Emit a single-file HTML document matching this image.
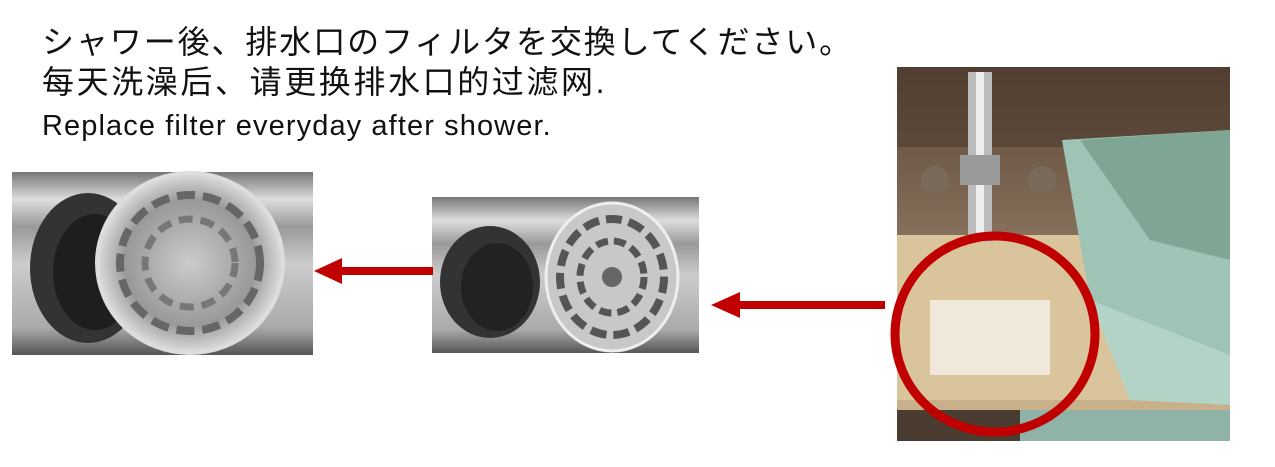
<!DOCTYPE html>
<html><head><meta charset="utf-8"><style>
html,body{margin:0;padding:0;background:#fff;width:1275px;height:467px;overflow:hidden}
.t{position:absolute;left:42px;color:#111;font-family:"Liberation Sans","Noto Sans CJK JP",sans-serif;white-space:nowrap}
</style></head><body>
<div class="t" style="top:20px;font-size:32px;letter-spacing:1.9px;font-family:'Noto Sans CJK JP',sans-serif;line-height:40px">シャワー後、排水口のフィルタを交換してください。</div>
<div class="t" style="top:62px;font-size:32px;letter-spacing:2.6px;font-family:'Liberation Sans','Noto Sans CJK SC',sans-serif;line-height:40px">每天洗澡后、请更换排水口的过滤网.</div>
<div class="t" style="top:108px;font-size:29px;letter-spacing:1.1px;line-height:36px">Replace filter everyday after shower.</div>
<svg width="1275" height="467" style="position:absolute;left:0;top:0">
<defs>
<linearGradient id="steel" x1="0" y1="0" x2="0" y2="1">
<stop offset="0" stop-color="#777"/><stop offset=".15" stop-color="#ddd"/><stop offset=".3" stop-color="#999"/><stop offset=".5" stop-color="#ccc"/><stop offset=".85" stop-color="#aaa"/><stop offset="1" stop-color="#555"/></linearGradient>
<radialGradient id="mesh"><stop offset="0" stop-color="#ccc"/><stop offset=".7" stop-color="#999"/><stop offset="1" stop-color="#ddd"/></radialGradient>
<linearGradient id="cab" x1="0" y1="0" x2="0" y2="1"><stop offset="0" stop-color="#5a4535"/><stop offset=".5" stop-color="#8b7560"/><stop offset="1" stop-color="#a08a70"/></linearGradient>
</defs>
<rect x="12" y="172" width="301" height="183" fill="url(#steel)"/>
<ellipse cx="88" cy="268" rx="58" ry="75" fill="#333"/>
<ellipse cx="95" cy="272" rx="42" ry="58" fill="#1e1e1e"/>
<ellipse cx="190" cy="263" rx="93" ry="90" fill="url(#mesh)" stroke="#ddd" stroke-width="4"/>
<ellipse cx="190" cy="263" rx="70" ry="68" fill="none" stroke="#666" stroke-width="8" stroke-dasharray="18 8"/>
<ellipse cx="190" cy="263" rx="45" ry="44" fill="none" stroke="#777" stroke-width="7" stroke-dasharray="14 8"/>
<rect x="432" y="197" width="267" height="156" fill="url(#steel)"/>
<ellipse cx="490" cy="282" rx="50" ry="56" fill="#333"/>
<ellipse cx="497" cy="287" rx="36" ry="44" fill="#222"/>
<ellipse cx="612" cy="277" rx="66" ry="74" fill="#c8c8c8" stroke="#eee" stroke-width="3"/>
<ellipse cx="612" cy="277" rx="52" ry="58" fill="none" stroke="#555" stroke-width="8" stroke-dasharray="16 7"/>
<ellipse cx="612" cy="277" rx="32" ry="36" fill="none" stroke="#555" stroke-width="7" stroke-dasharray="12 6"/>
<circle cx="612" cy="277" r="10" fill="#666"/>
<rect x="335" y="267" width="98" height="8" fill="#c00000"/>
<polygon points="314,271 342,258 342,284" fill="#c00000"/>
<rect x="732" y="301" width="153" height="8" fill="#c00000"/>
<polygon points="711,305 740,292 740,318" fill="#c00000"/>
<rect x="897" y="67" width="333" height="374" fill="url(#cab)"/>
<rect x="897" y="67" width="333" height="80" fill="#4a372b" opacity=".5"/>
<rect x="897" y="235" width="333" height="170" fill="#d9c49c"/>
<rect x="897" y="400" width="333" height="10" fill="#c8b08a"/>
<rect x="897" y="410" width="333" height="31" fill="#4a3c30"/>
<rect x="968" y="72" width="24" height="170" fill="#bbb"/>
<rect x="976" y="72" width="8" height="170" fill="#eee"/>
<rect x="960" y="155" width="40" height="30" fill="#999"/>
<circle cx="935" cy="180" r="14" fill="#7a6a5a"/>
<circle cx="1042" cy="180" r="14" fill="#7a6a5a"/>
<path d="M1062 140 L1230 130 L1230 355 L1150 330 L1090 300 Z" fill="#9fc4b6"/>
<path d="M1080 140 L1230 130 L1230 260 L1150 240 Z" fill="#7fa595"/>
<path d="M1090 300 L1230 355 L1230 405 L1130 400 Z" fill="#b2d3c6"/>
<rect x="1020" y="410" width="210" height="31" fill="#8fb3a6"/>
<rect x="930" y="300" width="120" height="75" fill="#f3efe6" opacity=".85"/>
<ellipse cx="995" cy="334" rx="100" ry="98" fill="none" stroke="#c00000" stroke-width="9"/>
</svg>
</body></html>
